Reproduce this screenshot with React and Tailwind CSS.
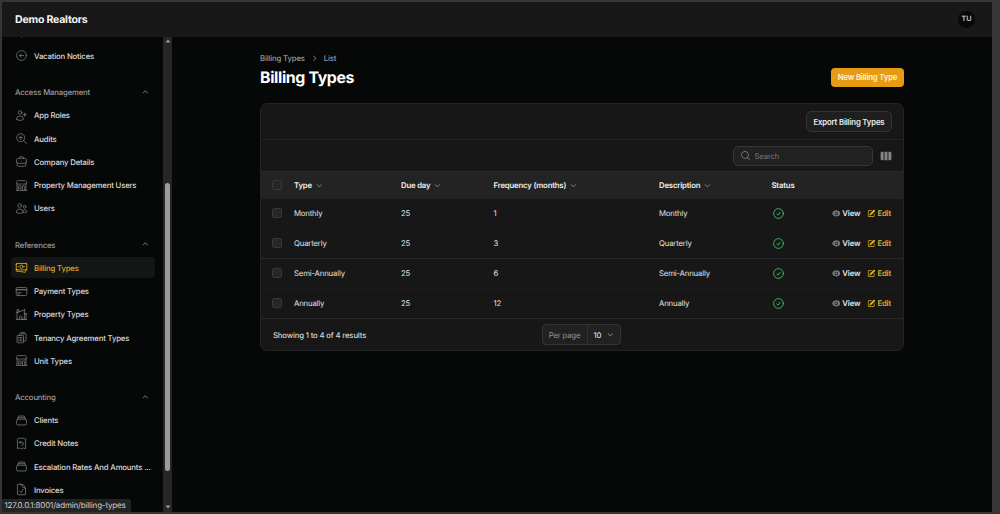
import {
    HiMiniChevronDown,
    HiMiniChevronRight,
    HiMiniChevronUp,
    HiMiniEye,
    HiMiniMagnifyingGlass,
    HiMiniPencilSquare,
    HiMiniViewColumns,
    HiOutlineArrowLeftCircle,
    HiOutlineBanknotes,
    HiOutlineBriefcase,
    HiOutlineBuildingStorefront,
    HiOutlineChatBubbleBottomCenter,
    HiOutlineCheckCircle,
    HiOutlineClipboardDocumentList,
    HiOutlineCreditCard,
    HiOutlineDocumentCheck,
    HiOutlineHomeModern,
    HiOutlineMagnifyingGlassPlus,
    HiOutlineReceiptRefund,
    HiOutlineRectangleStack,
    HiOutlineUserPlus,
    HiOutlineUsers,
} from 'react-icons/hi2'
import clsx from 'clsx'

const groups = [
    {
        label: 'Access Management',
        items: [
            { label: 'App Roles', icon: HiOutlineUserPlus },
            { label: 'Audits', icon: HiOutlineMagnifyingGlassPlus },
            { label: 'Company Details', icon: HiOutlineBriefcase },
            { label: 'Property Management Users', icon: HiOutlineBuildingStorefront },
            { label: 'Users', icon: HiOutlineUsers },
        ],
    },
    {
        label: 'References',
        items: [
            { label: 'Billing Types', icon: HiOutlineBanknotes, active: true },
            { label: 'Payment Types', icon: HiOutlineCreditCard },
            { label: 'Property Types', icon: HiOutlineHomeModern },
            { label: 'Tenancy Agreement Types', icon: HiOutlineClipboardDocumentList },
            { label: 'Unit Types', icon: HiOutlineBuildingStorefront },
        ],
    },
    {
        label: 'Accounting',
        items: [
            { label: 'Clients', icon: HiOutlineRectangleStack },
            { label: 'Credit Notes', icon: HiOutlineReceiptRefund },
            { label: 'Escalation Rates And Amounts ...', icon: HiOutlineRectangleStack },
            { label: 'Invoices', icon: HiOutlineDocumentCheck },
        ],
    },
]

const rows = [
    { type: 'Monthly', dueDay: 25, frequency: 1 },
    { type: 'Quarterly', dueDay: 25, frequency: 3 },
    { type: 'Semi-Annually', dueDay: 25, frequency: 6 },
    { type: 'Annually', dueDay: 25, frequency: 12 },
]

const columns = 'grid grid-cols-[33px_107px_92.5px_165.5px_112.5px_1fr] items-center pr-[12px]'

function NavItem({ label, icon: Icon, active }) {
    return (
        <li className="flex h-[23.25px] items-center">
            <a
                className={clsx(
                    'flex h-[21px] w-full items-center gap-[6.3px] rounded-[4px] pl-[3.7px] font-medium whitespace-nowrap',
                    active ? 'bg-[#141515] text-[#d9ab28]' : 'text-[#dcdcde]',
                )}
            >
                <Icon className={clsx('size-[13px] shrink-0', active ? 'text-[#e6b31c]' : 'text-[#77777b]')} />
                {label}
            </a>
        </li>
    )
}

function NavGroup({ label, items }) {
    return (
        <div>
            <div className="flex h-[23.25px] items-center justify-between pr-[4px] pl-[4px] font-medium text-[#9a9a9e]">
                {label}
                <HiMiniChevronUp className="size-[10.6px] text-[#7a7a7e]" />
            </div>
            <ul>
                {items.map((item) => (
                    <NavItem key={item.label} {...item} />
                ))}
            </ul>
        </div>
    )
}

function Sidebar() {
    return (
        <aside className="flex w-[170px] shrink-0 overflow-hidden">
            <nav className="-mt-[15.4px] flex w-[161px] flex-col gap-[12.9px] pr-[8px] pl-[9px]">
                <ul>
                    <NavItem label="" icon={HiOutlineChatBubbleBottomCenter} />
                    <NavItem label="Vacation Notices" icon={HiOutlineArrowLeftCircle} />
                </ul>
                {groups.map((group) => (
                    <NavGroup key={group.label} {...group} />
                ))}
            </nav>
            {/* Scrollbar */}
            <div className="flex w-[9px] flex-col items-center bg-[#262626] pt-[2px] pb-[3px]">
                <svg viewBox="0 0 6 4" className="h-[4px] w-[6px] fill-[#9c9c9c]">
                    <path d="M0.5 3.5 3 0.5 5.5 3.5z" />
                </svg>
                <div className="mt-[140.5px] h-[287.5px] w-[5px] rounded-full bg-[#9b9b9b]" />
                <svg viewBox="0 0 6 4" className="mt-auto h-[4px] w-[6px] fill-[#9c9c9c]">
                    <path d="M0.5 0.5 3 3.5 5.5 0.5z" />
                </svg>
            </div>
        </aside>
    )
}

function Checkbox() {
    return <span className="ml-[11px] block size-[10px] rounded-[2.5px] border border-[#3a3b3c] bg-[#252627]" />
}

function HeaderCell({ children, sortable = true }) {
    return (
        <div className="flex items-center gap-[2px] font-semibold text-[#efefef]">
            {children}
            {sortable && <HiMiniChevronDown className="size-[10.6px] text-[#6d6d70]" />}
        </div>
    )
}

function BillingTable() {
    return (
        <section className="mt-[16px] h-[248px] rounded-[7px] border border-[#222323] bg-[#171717]">
            <div className="flex h-[36px] items-center justify-end border-b border-[#222222] pr-[11px]">
                <button className="h-[21px] w-[86px] rounded-[5px] border border-[#343435] bg-[#1f1f20] font-semibold whitespace-nowrap text-[#ededed]">
                    Export Billing Types
                </button>
            </div>
            <div className="flex h-[31px] items-center justify-end gap-[7px] pr-[11px]">
                <div className="flex h-[20px] w-[140px] items-center gap-[4px] rounded-[5px] border border-[#363637] bg-[#212122] pl-[5.5px] text-[#77777b]">
                    <HiMiniMagnifyingGlass className="size-[11px] text-[#7b7b7f]" />
                    Search
                </div>
                <HiMiniViewColumns className="size-[12px] text-[#858588]" />
            </div>
            <div className={clsx(columns, 'h-[27.6px] border-t border-[#292929] bg-[#232323]')}>
                <Checkbox />
                <HeaderCell>Type</HeaderCell>
                <HeaderCell>Due day</HeaderCell>
                <HeaderCell>Frequency (months)</HeaderCell>
                <HeaderCell>Description</HeaderCell>
                <HeaderCell sortable={false}>Status</HeaderCell>
            </div>
            <div className="text-[#e0e0e0]">
                {rows.map((row, i) => (
                    <div
                        key={row.type}
                        className={clsx(columns, 'h-[30.1px] border-b', i % 2 ? 'border-[#282828]' : 'border-[#1b1b1b]')}
                    >
                        <Checkbox />
                        <span>{row.type}</span>
                        <span>{row.dueDay}</span>
                        <span>{row.frequency}</span>
                        <span>{row.type}</span>
                        <div className="flex items-center justify-between">
                            <HiOutlineCheckCircle className="size-[13px] text-[#47cf76]" />
                            <div className="flex items-center gap-[6.3px] font-semibold">
                                <a className="flex items-center gap-[2px] text-[#e4e4e5]">
                                    <HiMiniEye className="size-[8.8px] text-[#77777b]" />
                                    View
                                </a>
                                <a className="flex items-center gap-[2px] text-[#dcae2a]">
                                    <HiMiniPencilSquare className="size-[8.8px] text-[#e6b31c]" />
                                    Edit
                                </a>
                            </div>
                        </div>
                    </div>
                ))}
            </div>
            <div className="grid h-[31.5px] grid-cols-[1fr_79px_1fr] items-center pr-[14px] pl-[12px]">
                <span className="font-medium text-[#d3d3d5]">Showing 1 to 4 of 4 results</span>
                <div className="flex h-[21px] items-stretch rounded-[4px] border border-[#343435] bg-[#212122]">
                    <span className="flex w-[45px] items-center justify-center border-r border-[#303031] text-[#919195]">
                        Per page
                    </span>
                    <span className="flex flex-1 items-center justify-between pr-[4px] pl-[6px] text-[#ececec]">
                        10
                        <HiMiniChevronDown className="size-[10.6px] text-[#77777b]" />
                    </span>
                </div>
            </div>
        </section>
    )
}

export default function App() {
    return (
        <div className="relative h-[514px] w-[1000px] overflow-hidden bg-[#363636] pt-[2px] pr-[8px] pb-[2px] pl-[2px] font-['Inter',sans-serif] text-[7.75px] leading-[12px] tracking-[-0.17px] [text-rendering:geometricPrecision]">
            <div className="flex h-full flex-col overflow-hidden rounded-t-[2px] bg-[#060707]">
                <header className="flex h-[34.5px] shrink-0 items-center justify-between bg-[#181818] pr-[17px] pl-[13px]">
                    <span className="pt-px text-[10.6px] font-bold tracking-[-0.24px] text-[#f4f4f4]">Demo Realtors</span>
                    <span className="flex size-[17px] items-center justify-center rounded-full bg-[#080808] text-[7.2px] font-medium tracking-normal text-[#e0e0e0]">
                        TU
                    </span>
                </header>
                <div className="flex min-h-0 flex-1">
                    <Sidebar />
                    <main className="flex-1 pt-[15.5px] pr-[88px] pl-[88px]">
                        <div className="flex items-center gap-[4.2px] font-medium text-[#9a9a9e]">
                            Billing Types
                            <HiMiniChevronRight className="size-[10.6px] text-[#77777b]" />
                            List
                        </div>
                        <div className="mt-[3px] flex h-[20px] items-center justify-between">
                            <h1 className="pt-px text-[15.9px] font-bold tracking-[-0.38px] text-white">Billing Types</h1>
                            <button className="h-[19px] w-[73px] rounded-[4px] bg-[#e69b12] font-semibold whitespace-nowrap text-[#fdf3dc]">
                                New Billing Type
                            </button>
                        </div>
                        <BillingTable />
                    </main>
                </div>
            </div>
            {/* Link address shown by the browser on hover */}
            <div className="absolute bottom-[2px] left-[2px] flex h-[13px] w-[129px] items-center rounded-tr-[2px] bg-[#222323] pb-px pl-[2.5px] text-[8px] whitespace-nowrap text-[#d0d0d0]">
                127.0.0.1:8001/admin/billing-types
            </div>
        </div>
    )
}
